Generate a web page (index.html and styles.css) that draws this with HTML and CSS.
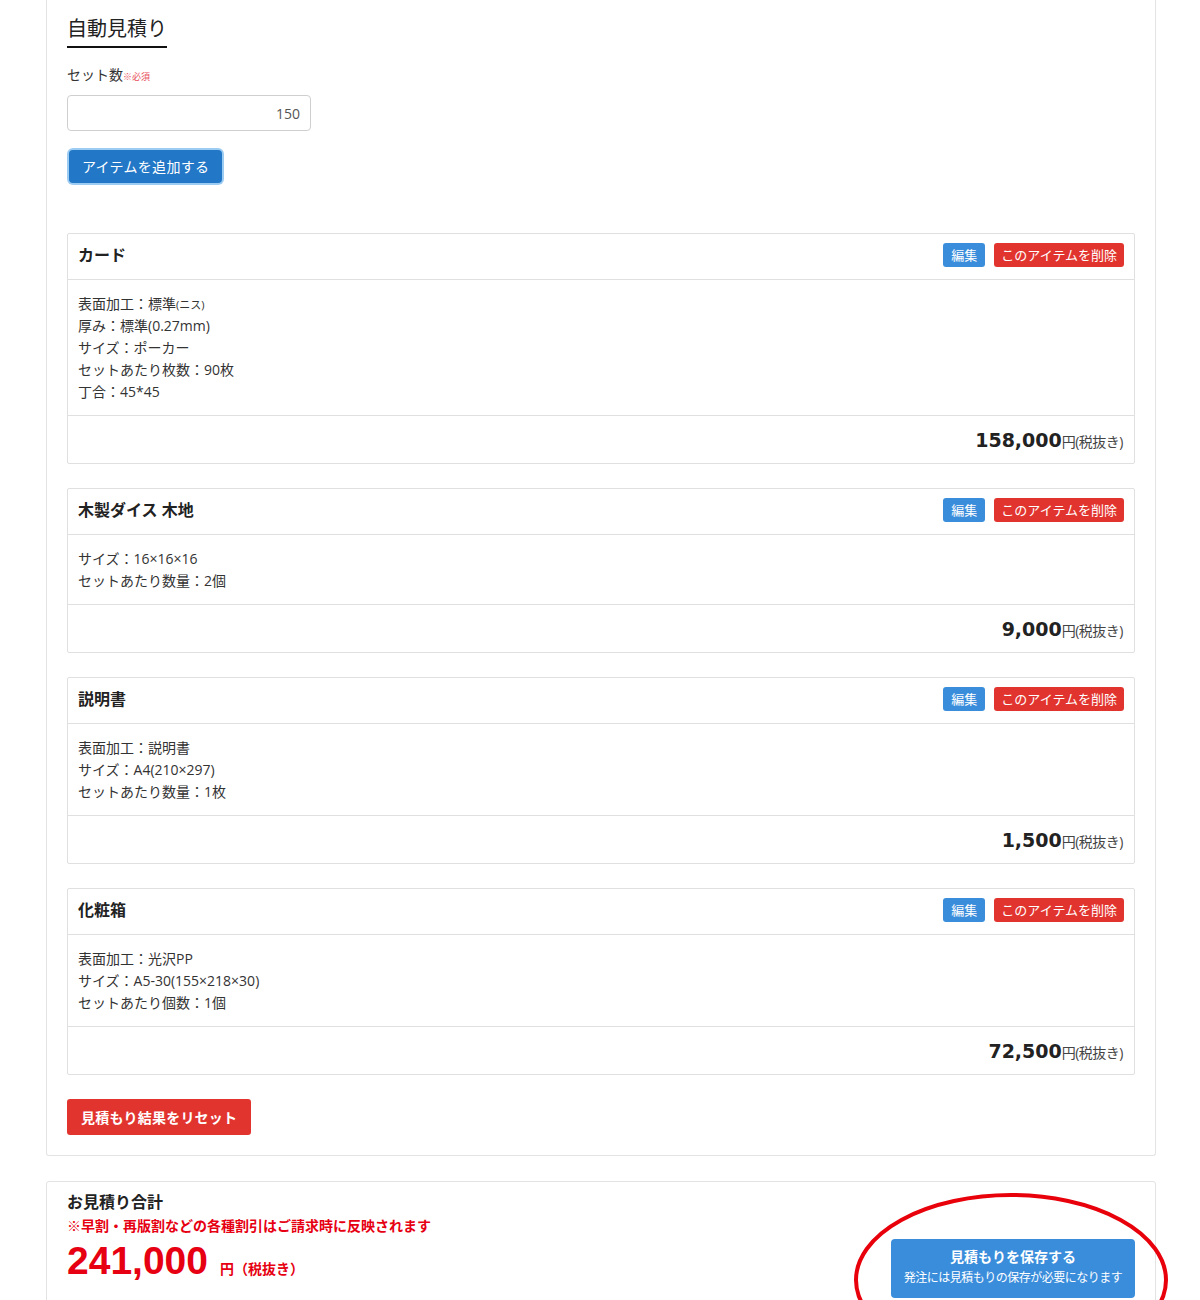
FILE: index.html
```html
<!DOCTYPE html>
<html lang="ja">
<head>
<meta charset="utf-8">
<title>自動見積り</title>
<link rel="stylesheet" href="styles.css">
</head>
<body>
<div class="container">
  <section class="panel panel-top">
    <h2 class="heading">自動見積り</h2>
    <div class="label">セット数<span class="req">※必須</span></div>
    <input class="num-input" type="text" value="150">
    <div><button class="btn-add">アイテムを追加する</button></div>

    <div class="cards">
      <div class="card">
        <div class="card-head">
          <div class="card-title">カード</div>
          <div class="actions"><span class="btn-sm btn-edit">編集</span><span class="btn-sm btn-del">このアイテムを削除</span></div>
        </div>
        <div class="card-body">
          <div>表面加工：標準<span class="tiny">(ニス)</span></div>
          <div>厚み：標準(0.27mm)</div>
          <div>サイズ：ポーカー</div>
          <div>セットあたり枚数：90枚</div>
          <div>丁合：45*45</div>
        </div>
        <div class="card-foot"><span class="price">158,000</span><span class="unit">円(税抜き)</span></div>
      </div>

      <div class="card">
        <div class="card-head">
          <div class="card-title">木製ダイス 木地</div>
          <div class="actions"><span class="btn-sm btn-edit">編集</span><span class="btn-sm btn-del">このアイテムを削除</span></div>
        </div>
        <div class="card-body">
          <div>サイズ：16×16×16</div>
          <div>セットあたり数量：2個</div>
        </div>
        <div class="card-foot"><span class="price">9,000</span><span class="unit">円(税抜き)</span></div>
      </div>

      <div class="card">
        <div class="card-head">
          <div class="card-title">説明書</div>
          <div class="actions"><span class="btn-sm btn-edit">編集</span><span class="btn-sm btn-del">このアイテムを削除</span></div>
        </div>
        <div class="card-body">
          <div>表面加工：説明書</div>
          <div>サイズ：A4(210×297)</div>
          <div>セットあたり数量：1枚</div>
        </div>
        <div class="card-foot"><span class="price">1,500</span><span class="unit">円(税抜き)</span></div>
      </div>

      <div class="card">
        <div class="card-head">
          <div class="card-title">化粧箱</div>
          <div class="actions"><span class="btn-sm btn-edit">編集</span><span class="btn-sm btn-del">このアイテムを削除</span></div>
        </div>
        <div class="card-body">
          <div>表面加工：光沢PP</div>
          <div>サイズ：A5-30(155×218×30)</div>
          <div>セットあたり個数：1個</div>
        </div>
        <div class="card-foot"><span class="price">72,500</span><span class="unit">円(税抜き)</span></div>
      </div>
    </div>

    <button class="btn-reset">見積もり結果をリセット</button>
  </section>

  <section class="panel panel-total">
    <div class="total-left">
      <div class="total-title">お見積り合計</div>
      <div class="total-note">※早割・再版割などの各種割引はご請求時に反映されます</div>
      <div class="total-price"><span class="total-num">241,000</span><span class="total-unit">円（税抜き）</span></div>
    </div>
    <div class="save-wrap">
      <button class="btn-save"><span class="save-main">見積もりを保存する</span><span class="save-sub">発注には見積もりの保存が必要になります</span></button>
      <svg class="annot" width="316" height="176" viewBox="0 0 316 176"><ellipse cx="158" cy="88" rx="155" ry="85" fill="none" stroke="#e8000b" stroke-width="4"/></svg>
    </div>
  </section>
</div>
</body>
</html>
```

FILE: styles.css
```css
html, body {
  margin: 0;
  padding: 0;
  background: #fff;
}
body {
  font-family: "Open Sans", "Noto Sans CJK JP", sans-serif;
  color: #333;
  font-size: 14px;
  line-height: 22px;
  overflow: hidden;
}
.container {
  width: 1110px;
  margin: 0 0 0 46px;
}
.panel {
  border: 1px solid #e3e3e3;
  border-radius: 3px;
  padding: 20px;
  background: #fff;
}
.panel-top {
  border-top: none;
  border-radius: 0 0 3px 3px;
  padding-top: 14px;
}
.heading {
  display: inline-block;
  margin: 0;
  font-size: 20px;
  font-weight: normal;
  line-height: 30px;
  color: #222;
  padding-bottom: 2px;
  border-bottom: 2px solid #111;
}
.label {
  margin-top: 16px;
  font-size: 14px;
  line-height: 22px;
  color: #333;
}
.req {
  font-size: 9px;
  line-height: 0;
  color: #e8505b;
}
.num-input {
  display: block;
  box-sizing: border-box;
  margin-top: 9px;
  width: 244px;
  height: 36px;
  border: 1px solid #cfcfcf;
  border-radius: 4px;
  padding: 0 10px;
  text-align: right;
  font-family: "Open Sans", "Noto Sans CJK JP", sans-serif;
  font-size: 14px;
  color: #555;
}
.btn-add {
  margin-top: 19px;
  margin-left: 2px;
  height: 33px;
  padding: 0 13px 2px;
  border: none;
  border-radius: 4px;
  background: #2277c7;
  color: #fff;
  font-family: "Open Sans", "Noto Sans CJK JP", sans-serif;
  font-size: 14px;
  letter-spacing: 0.3px;
  box-shadow: 0 0 0 2px #9dccf3;
}
.cards {
  margin-top: 50px;
  display: flex;
  flex-direction: column;
  gap: 24px;
}
.card {
  border: 1px solid #e0e0e0;
  border-radius: 2px;
}
.card-head {
  height: 45px;
  padding: 0 10px;
  display: flex;
  align-items: center;
  justify-content: space-between;
  border-bottom: 1px solid #e0e0e0;
}
.card-title {
  font-size: 16px;
  font-weight: bold;
  color: #222;
  margin-top: -3px;
}
.actions {
  display: flex;
  gap: 9px;
  margin-top: -3px;
}
.btn-sm {
  display: inline-block;
  height: 24px;
  line-height: 24px;
  font-size: 13px;
  color: #fff;
  border-radius: 3px;
}
.btn-edit {
  background: #3a8ddb;
  padding: 0 8px;
}
.btn-del {
  background: #e2342f;
  padding: 0 7px;
}
.tiny {
  font-size: 11px;
  line-height: 0;
}
.card-body {
  padding: 13px 10px 12px;
  border-bottom: 1px solid #e0e0e0;
  font-size: 14px;
  line-height: 22px;
  color: #333;
}
.card-foot {
  height: 47px;
  padding: 0 11px;
  display: flex;
  align-items: center;
  justify-content: flex-end;
}
.price {
  font-family: "DejaVu Sans", sans-serif;
  font-weight: bold;
  font-size: 19px;
  color: #222;
  margin-top: 0;
}
.unit {
  font-size: 14px;
  color: #444;
  margin-top: 5px;
  letter-spacing: -0.5px;
}
.btn-reset {
  margin-top: 24px;
  height: 36px;
  padding: 0 14px;
  border: none;
  border-radius: 3px;
  background: #e2342f;
  color: #fff;
  font-family: "Open Sans", "Noto Sans CJK JP", sans-serif;
  font-weight: bold;
  font-size: 14px;
  letter-spacing: 0.2px;
  display: block;
}
.panel-total {
  margin-top: 25px;
  padding-top: 9px;
  display: flex;
  justify-content: space-between;
  align-items: flex-start;
  height: 140px;
}
.total-title {
  font-size: 16px;
  font-weight: bold;
  color: #222;
}
.total-note {
  font-size: 14px;
  font-weight: bold;
  color: #e60012;
  margin-top: 2px;
}
.total-price {
  display: flex;
  align-items: baseline;
  margin-top: 2px;
  color: #e60012;
}
.total-num {
  font-family: "Liberation Sans", sans-serif;
  font-weight: bold;
  font-size: 39px;
  line-height: 44px;
}
.total-unit {
  font-weight: bold;
  font-size: 14px;
  margin-left: 12px;
}
.save-wrap {
  position: relative;
  margin-top: 48px;
}
.btn-save {
  width: 244px;
  padding: 7px 0 10px;
  border: none;
  border-radius: 4px;
  background: #3a8ddb;
  color: #fff;
  font-family: "Open Sans", "Noto Sans CJK JP", sans-serif;
  display: flex;
  flex-direction: column;
  align-items: center;
}
.save-main {
  font-size: 14px;
  font-weight: bold;
  line-height: 22px;
}
.save-sub {
  font-size: 12px;
  line-height: 20px;
  white-space: nowrap;
  letter-spacing: -0.5px;
}
.annot {
  position: absolute;
  left: -38px;
  top: -47px;
  pointer-events: none;
}
```
